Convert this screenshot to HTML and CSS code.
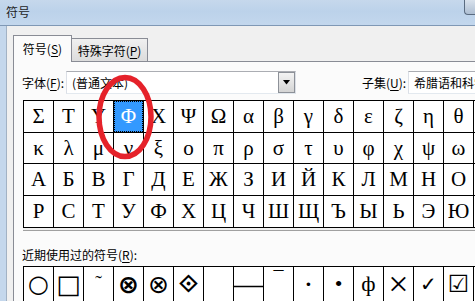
FILE: index.html
```html
<!DOCTYPE html>
<html>
<head>
<meta charset="utf-8">
<link rel="stylesheet" href="styles.css">
</head>
<body>
<div class="titlebar"><span class="title">符号</span><span class="close"></span></div>
<div class="frame">
  <div class="frame-edge"></div>
  <div class="dialog">
    <div class="tabs">
      <div class="tab active">符号(<u>S</u>)</div>
      <div class="tab">特殊字符(<u>P</u>)</div>
    </div>
    <div class="panel">
      <div class="font-row">
        <label class="lbl font-lbl">字体(<u>F</u>):</label>
        <div class="combo font-combo"><span class="combo-text">(普通文本)</span><span class="drop"><svg width="8" height="5" viewBox="0 0 8 5"><path d="M0 0H7L3.5 4.5Z" fill="#000"/></svg></span></div>
        <label class="lbl subset-lbl">子集(<u>U</u>):</label>
        <div class="combo subset-combo"><span class="combo-text">希腊语和科学</span></div>
      </div>
      <div class="grid chars">
        <span>Σ</span><span>Τ</span><span>Υ</span><span class="sel">Φ</span><span>Χ</span><span>Ψ</span><span>Ω</span><span>α</span><span>β</span><span>γ</span><span>δ</span><span>ε</span><span>ζ</span><span>η</span><span>θ</span><span>ι</span>
        <span>κ</span><span>λ</span><span>μ</span><span>ν</span><span>ξ</span><span>ο</span><span>π</span><span>ρ</span><span>σ</span><span>τ</span><span>υ</span><span>φ</span><span>χ</span><span>ψ</span><span>ω</span><span>ϊ</span>
        <span>А</span><span>Б</span><span>В</span><span>Г</span><span>Д</span><span>Е</span><span>Ж</span><span>З</span><span>И</span><span>Й</span><span>К</span><span>Л</span><span>М</span><span>Н</span><span>О</span><span>П</span>
        <span>Р</span><span>С</span><span>Т</span><span>У</span><span>Ф</span><span>Х</span><span>Ц</span><span>Ч</span><span>Ш</span><span>Щ</span><span>Ъ</span><span>Ы</span><span>Ь</span><span>Э</span><span>Ю</span><span>Я</span>
      </div>
      <div class="lbl recent-lbl">近期使用过的符号(<u>R</u>):</div>
      <div class="grid recent">
        <span class="r-circle">○</span><span class="r-square">□</span><span class="r-tilde">˜</span><span class="r-otimes-b">⊗</span><span class="r-otimes">⊗</span><span class="r-diamond">⟐</span><span></span><span class="r-dash">―</span><span class="r-macron">¯</span><span class="r-mid">·</span><span class="r-bullet">•</span><span class="r-ef">ф</span><span class="r-times">×</span><span class="r-check">✓</span><span class="r-box">☑</span><span></span>
      </div>
    </div>
  </div>
</div>
<svg class="ring" width="62" height="90" viewBox="0 0 62 90"><ellipse cx="30" cy="44" rx="26" ry="39.5" fill="none" stroke="#e5222a" stroke-width="5.5"/></svg>
</body>
</html>
```

FILE: styles.css
```css
html, body {
  margin: 0;
  padding: 0;
}
body {
  width: 475px;
  height: 301px;
  overflow: hidden;
  position: relative;
  background: #f0f0f0;
  font-family: "Noto Sans CJK SC", "Noto Sans", sans-serif;
  font-size: 12px;
  color: #000;
}
u { text-decoration: underline; text-underline-offset: 2px; }

.titlebar {
  height: 25px;
  border-bottom: 1px solid #7f98b5;
  background: linear-gradient(to bottom, #c6d8ec 0%, #bcd2ea 45%, #c3d7ed 100%);
  display: flex;
  align-items: flex-start;
}
.title {
  padding-left: 6px;
  line-height: 24px;
  color: #1e1e1e;
}
.close {
  margin-left: auto;
  width: 10px;
  height: 14px;
  border: 1px solid #5a6b80;
  border-top: none;
  border-right: none;
  border-radius: 0 0 0 4px;
  background: linear-gradient(to bottom, #d9e2ec, #aebfd3);
}

.frame {
  display: flex;
  height: 275px;
}
.frame-edge {
  width: 6px;
  background: #c4d7ec;
  border-right: 1px solid #a2b2c4;
  margin-right: 1px;
  flex: none;
}
.dialog {
  flex: 1;
  padding: 9px 0 0 5px;
  min-width: 0;
}
.tabs {
  display: flex;
  align-items: flex-end;
  height: 26px;
}
.tab {
  box-sizing: border-box;
  height: 23px;
  width: 76px;
  border: 1px solid #898c95;
  border-bottom: none;
  border-left: none;
  background: linear-gradient(to bottom, #f0f0f0, #dcdcdc);
  display: flex;
  align-items: center;
  justify-content: center;
  padding-top: 1px;
}
.tab.active {
  position: relative;
  z-index: 1;
  width: 59px;
  height: 27px;
  margin-bottom: -1px;
  border-left: 1px solid #898c95;
  background: #fbfbfb;
  padding-top: 0;
  padding-bottom: 2px;
}
.panel {
  border-top: 1px solid #898c95;
  border-left: 1px solid #898c95;
  background: #fbfbfb;
  padding: 9px 0 0 8px;
  height: 300px;
}
.lbl { white-space: nowrap; }
.font-row {
  display: flex;
  align-items: center;
  height: 23px;
  white-space: nowrap;
}
.font-row > * { flex: none; }
.font-lbl { width: 44px; }
.combo {
  box-sizing: border-box;
  height: 23px;
  border: 1px solid #abadb3;
  border-left-color: #dbdfe6;
  border-bottom-color: #e3e9ef;
  border-right-color: #dbdfe6;
  background: #fff;
  display: flex;
  align-items: center;
  overflow: hidden;
}
.combo-text { padding-left: 5px; }
.font-combo { width: 230px; }
.drop {
  margin-left: auto;
  box-sizing: border-box;
  width: 17px;
  height: 21px;
  border: 1px solid #8d9198;
  background: linear-gradient(to bottom, #f3f3f3, #d4d4d4);
  display: flex;
  align-items: center;
  justify-content: center;
}
.subset-lbl { margin-left: 66px; width: 46px; }
.subset-combo { width: 120px; }

.grid {
  display: grid;
  grid-template-columns: repeat(16, 29px);
  gap: 1px;
  border: 1px solid #000;
  border-right: none;
  background: #000;
  margin-left: 1px;
  width: 520px;
}
.grid span {
  background: #fff;
  display: flex;
  align-items: center;
  justify-content: center;
  font-family: "Liberation Serif", "DejaVu Serif", serif;
  font-size: 21px;
  line-height: 1;
}
.chars {
  margin-top: 6px;
  grid-template-rows: 31px 30px 31px 31px;
  border-bottom: 1px solid #000;
  box-shadow: 0 2px 0 0 #f0f0f0, 0 3px 0 0 #a0a0a0;
}
.chars span.sel {
  background: #3399ff;
  color: #fff;
  outline: 1px dotted #000;
  outline-offset: -1px;
}
.recent-lbl {
  margin-top: 19px;
  line-height: 16px;
}
.recent {
  margin-top: 3px;
  grid-template-rows: 40px;
}
.recent span { padding-bottom: 6px; box-sizing: border-box; }
.recent .r-circle, .recent .r-square, .recent .r-otimes-b, .recent .r-otimes, .recent .r-diamond, .recent .r-check, .recent .r-box {
  font-family: "DejaVu Sans", sans-serif;
}
.recent .r-circle { font-size: 24px; font-weight: bold; }
.recent .r-square { font-size: 26px; font-weight: bold; }
.recent .r-tilde { align-items: flex-start; padding-top: 6px; font-size: 20px; }
.recent .r-otimes-b { font-size: 25px; font-weight: bold; }
.recent .r-otimes { font-size: 25px; }
.recent .r-diamond { font-size: 24px; font-weight: bold; }
.recent .r-dash { font-size: 30px; }
.recent .r-macron { align-items: flex-start; padding-top: 2px; font-size: 20px; }
.recent .r-mid { font-size: 22px; font-weight: bold; }
.recent .r-bullet { font-size: 22px; }
.recent .r-ef { font-size: 22px; }
.recent .r-times { font-size: 36px; font-weight: normal; }
.recent .r-check { font-size: 20px; font-weight: bold; }
.recent .r-box { font-size: 24px; font-weight: bold; }

.ring {
  position: absolute;
  left: 95px;
  top: 73px;
}
```
